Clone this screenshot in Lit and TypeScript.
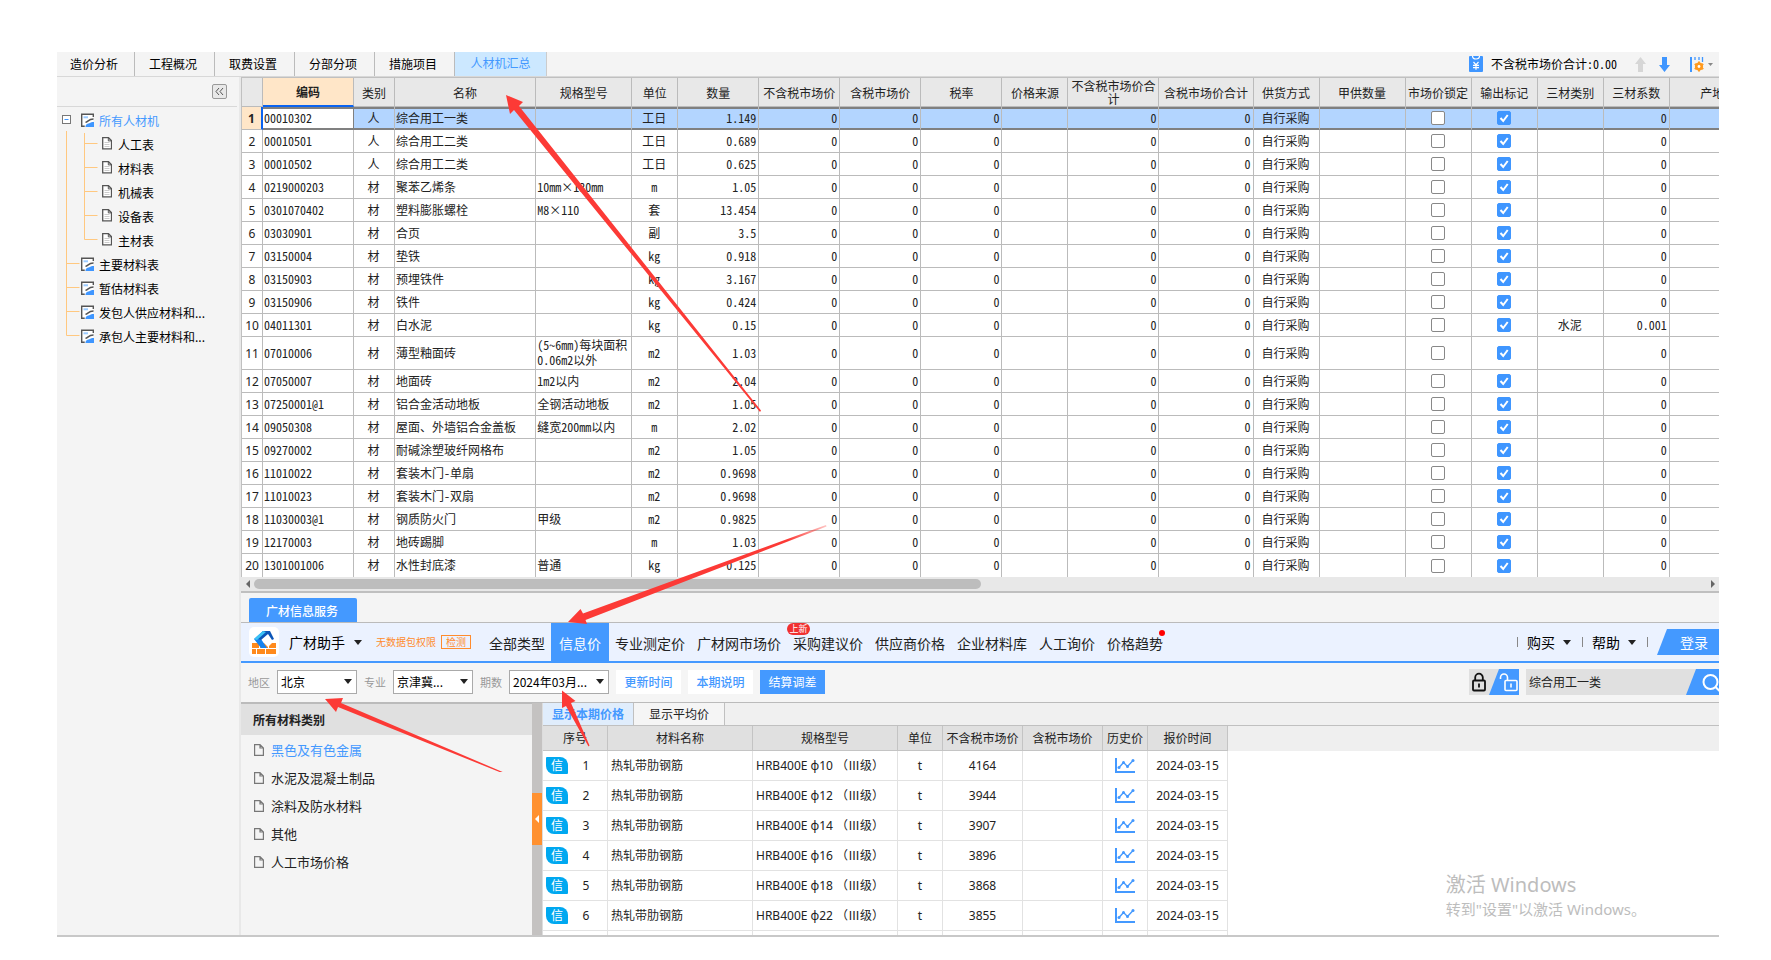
import { LitElement, html, css, svg, nothing } from "lit";
import { customElement } from "lit/decorators.js";
import { classMap } from "lit/directives/class-map.js";

const TABS = ["造价分析", "工程概况", "取费设置", "分部分项", "措施项目", "人材机汇总"];

type Node = { label: string; kind: "root" | "child" | "last-child" | "top" | "last-top" };
const TREE: Node[] = [
  { label: "所有人材机", kind: "root" },
  { label: "人工表", kind: "child" },
  { label: "材料表", kind: "child" },
  { label: "机械表", kind: "child" },
  { label: "设备表", kind: "child" },
  { label: "主材表", kind: "last-child" },
  { label: "主要材料表", kind: "top" },
  { label: "暂估材料表", kind: "top" },
  { label: "发包人供应材料和...", kind: "top" },
  { label: "承包人主要材料和...", kind: "last-top" },
];

const COLS: [string, number][] = [
  ["", 21], ["编码", 91], ["类别", 41], ["名称", 141], ["规格型号", 96], ["单位", 46], ["数量", 81],
  ["不含税市场价", 81], ["含税市场价", 81], ["税率", 81], ["价格来源", 66], ["不含税市场价合计", 91],
  ["含税市场价合计", 94], ["供货方式", 66], ["甲供数量", 86], ["市场价锁定", 66], ["输出标记", 66],
  ["三材类别", 66], ["三材系数", 66], ["产地", 86],
];

type Item = { code: string; type: string; name: string; spec: string; unit: string; qty: string; cat?: string; coef?: string };
const row = (code: string, type: string, name: string, spec: string, unit: string, qty: string, cat = "", coef = "0"): Item =>
  ({ code, type, name, spec, unit, qty, cat, coef });
const ITEMS: Item[] = [
  row("00010302", "人", "综合用工一类", "", "工日", "1.149"),
  row("00010501", "人", "综合用工二类", "", "工日", "0.689"),
  row("00010502", "人", "综合用工二类", "", "工日", "0.625"),
  row("0219000203", "材", "聚苯乙烯条", "10mm×130mm", "m", "1.05"),
  row("0301070402", "材", "塑料膨胀螺栓", "M8×110", "套", "13.454"),
  row("03030901", "材", "合页", "", "副", "3.5"),
  row("03150004", "材", "垫铁", "", "kg", "0.918"),
  row("03150903", "材", "预埋铁件", "", "kg", "3.167"),
  row("03150906", "材", "铁件", "", "kg", "0.424"),
  row("04011301", "材", "白水泥", "", "kg", "0.15", "水泥", "0.001"),
  row("07010006", "材", "薄型釉面砖", "(5~6mm)每块面积\n0.06m2以外", "m2", "1.03"),
  row("07050007", "材", "地面砖", "1m2以内", "m2", "2.04"),
  row("07250001@1", "材", "铝合金活动地板", "全钢活动地板", "m2", "1.05"),
  row("09050308", "材", "屋面、外墙铝合金盖板", "缝宽200mm以内", "m", "2.02"),
  row("09270002", "材", "耐碱涂塑玻纤网格布", "", "m2", "1.05"),
  row("11010022", "材", "套装木门-单扇", "", "m2", "0.9698"),
  row("11010023", "材", "套装木门-双扇", "", "m2", "0.9698"),
  row("11030003@1", "材", "钢质防火门", "甲级", "m2", "0.9825"),
  row("12170003", "材", "地砖踢脚", "", "m", "1.03"),
  row("1301001006", "材", "水性封底漆", "普通", "kg", "0.125"),
];

const NAV = ["全部类型", "信息价", "专业测定价", "广材网市场价", "采购建议价", "供应商价格", "企业材料库", "人工询价", "价格趋势"];
const CATEGORIES = ["黑色及有色金属", "水泥及混凝土制品", "涂料及防水材料", "其他", "人工市场价格"];
const PRICE_COLS: [string, number][] = [
  ["序号", 65], ["材料名称", 145], ["规格型号", 145], ["单位", 45], ["不含税市场价", 80], ["含税市场价", 80], ["历史价", 45], ["报价时间", 80],
];
const PRICES: [string, string][] = [["10", "4164"], ["12", "3944"], ["14", "3907"], ["16", "3896"], ["18", "3868"], ["22", "3855"]];

const caret = html`<svg class="caret" width="8" height="5" viewBox="0 0 8 5"><path d="M0 0h8L4 5z" fill="#222" /></svg>`;

const folderIcon = svg`
  <path d="M0.800 3.300h11.400v11.400H0.800z" fill="#fff" />
  <path d="M12.300 6V3.300H0.700v12h3" fill="none" stroke="#555" stroke-width="1.400" />
  <path d="M2.500 5.300h4.500v2H2.500z" fill="#9ccbff" />
  <path d="M4.500 11.300c2.500 0 2.500-3.300 8-3.300" fill="none" stroke="#555" stroke-width="1.400" />
  <path d="M4.500 16c0-3 2.500-3.400 4.500-4 1.500-1.200 2.600-1.200 4-1v5z" fill="#3f96ff" />`;
const pageIcon = svg`
  <path d="M0.700 2.700h5.800l3 3v8.100H0.700z" fill="#fff" stroke="#555" stroke-width="1.300" />
  <path d="M6.300 2.700v3.200h3.200" fill="none" stroke="#555" />
  <path d="M2.500 7.500h5M2.500 9.500h5M2.500 11.500h5" stroke="#ccc" />`;

@customElement("app-root")
export class AppRoot extends LitElement {
  static styles = css`
    :host { display: block; font: 12px/16px "Noto Sans CJK SC", sans-serif; color: #222; background: #fff; }
    * { box-sizing: border-box; }
    button, select, input { font: inherit; color: inherit; margin: 0; border: 0; padding: 0; background: none; border-radius: 0; }
    a { color: inherit; text-decoration: none; }
    svg { display: block; flex: none; }
    table { border-collapse: separate; border-spacing: 0; table-layout: fixed; }
    .frame { position: relative; margin: 52px 52px 23px 57px; background: #f4f4f4; border-bottom: 2px solid #c8c8c8; overflow: hidden; }

    .top { display: flex; height: 25px; border-bottom: 1px solid #d8d8d8; }
    .tab { width: 80px; padding-right: 3px; border-right: 1px solid #bbb; text-align: center; color: #000; }
    .tab:first-child { width: 78px; }
    .tab.on { width: 92px; padding: 0 0 2px; background: #cce8ff; color: #4499ff; border-color: #ccc; }
    .tools { margin-left: auto; display: flex; align-items: center; padding-right: 6px; color: #000; }
    .total { margin: 0 18px 0 8px; font-family: "Noto Sans Mono CJK SC", "Noto Sans CJK SC", sans-serif; }
    .tools button + button { margin-left: 13px; }
    .tools .gear { display: flex; align-items: center; gap: 4px; margin-left: 20px !important; }

    .body { display: grid; grid-template-columns: 182px 2px minmax(0, 1fr); }
    .strip { background: #e8e8e8; }
    .side-head { display: flex; justify-content: flex-end; align-items: center; height: 30px; margin-right: 2px; padding-right: 10px; border-bottom: 1px solid #d8d8d8; }
    .fold { width: 15px; height: 15px; border: 1px solid #999; border-radius: 2px; background: #e8e8e8; display: grid; place-items: center; }
    .tree { list-style: none; margin: 0; padding: 2px 0 0; }
    .tree li, .tree a { display: flex; align-items: center; }
    .tree li { height: 24px; }
    .tree a { gap: 5px; color: #000; }
    .tree .sub a { gap: 6px; }
    .tree .root a { color: #4499ff; }

    .grid-wrap { height: 500px; overflow: hidden; background: #fff; border-top: 1px solid #c0c0c0; border-left: 1px solid #c0c0c0; }
    .grid { width: 1514px; font-family: "Noto Sans Mono CJK SC", "Noto Sans CJK SC", sans-serif; line-height: 15px; }
    .grid th { height: 29px; background: #e8e8e8; font-weight: 400; border: solid #bbb; border-width: 0 1px 1px 0; padding: 0 2px; line-height: 13px; }
    .grid th.cur { background: #ffe6c8; font-weight: 700; border-bottom: 2px solid #0a63f0; }
    .grid td { height: 23px; border: solid #bbb; border-width: 0 1px 1px 0; padding: 0 2px 2px 1px; white-space: pre; overflow: hidden; }
    .grid .num { font-family: "Noto Sans", sans-serif; text-align: center; padding: 0; }
    .grid .c { text-align: center; }
    .grid .r { text-align: right; }
    .grid .box { padding: 0 2px; }
    .grid tr.sel td { background: #b3d5ff; box-shadow: inset 0 2px #808080, inset 0 -1px #808080; border-bottom-color: #808080; }
    .grid tr.sel td.num { background: #ffe6c8; box-shadow: none; font-weight: 700; border-right: 2px solid #0a63f0; border-bottom-color: #bbb; }
    .grid tr.sel td.edit { background: #fff; border-right-color: #808080; }
    .grid tr.tall td { height: 33px; }
    .grid tr:last-child td { border-bottom: 0; }
    .check { appearance: none; display: block; width: 14px; height: 14px; margin: 0 auto; border: 1px solid #888; border-radius: 2px; background: #fff; }
    .check:checked { border-color: #3f96ff; background: #3f96ff url("data:image/svg+xml,%3Csvg xmlns='http://www.w3.org/2000/svg' viewBox='0 0 12 12'%3E%3Cpath d='M2.500 6l2.700 3 4.500-6' fill='none' stroke='white' stroke-width='2'/%3E%3C/svg%3E"); }
    .scroll { display: flex; align-items: center; gap: 4px; height: 16px; padding: 0 4px 0 5px; background: #e8e8e8; border-bottom: 2px solid #bfbfbf; }
    .track { flex: 1; }
    .thumb { width: 50%; height: 10px; border-radius: 5px; background: #bdbdbd; }

    .dock { height: 30px; padding: 5px 8px 0; border-bottom: 1px solid #bbb; }
    .dock button { width: 108px; height: 24px; padding: 1px 2px 0 0; border-radius: 2px 2px 0 0; background: #4499ff; color: #fff; font-weight: 500; }
    .nav { display: flex; align-items: center; height: 40px; padding-left: 8px; background: #ebf2ff; border-bottom: 2px solid #4499ff; font-size: 14px; }
    .logo { width: 30px; height: 30px; border-radius: 5px; background: #fff; display: grid; place-items: center; }
    .helper { display: flex; align-items: center; gap: 9px; margin-left: 10px; color: #000; }
    .warn { margin-left: 14px; font-size: 10px; color: #ff8c2e; }
    .detect { height: 14px; margin: 0 12px 0 5px; padding: 0 4px; border: 1px solid #ff8c2e; font-size: 10px; line-height: 12px; color: #ff8c2e; }
    .links { display: flex; align-self: stretch; }
    .links a { position: relative; display: flex; align-items: center; padding: 1px 6px 0; }
    .links a.on { padding: 1px 8px 0; background: #4499ff; color: #fff; }
    .badge { position: absolute; top: 0; left: 0; width: 23px; height: 12px; border-radius: 6px; background: #f03030; color: #fff; font-size: 9px; line-height: 12px; text-align: center; }
    .dot { position: absolute; top: 7px; right: 4px; width: 6px; height: 6px; border-radius: 3px; background: red; }
    .account { display: flex; align-items: center; margin-left: auto; color: #000; }
    .account .menu { display: flex; align-items: center; gap: 8px; height: 10px; padding: 0 11px 0 9px; border-left: 1px solid #888; }
    .account .end { width: 10px; height: 10px; border-left: 1px solid #888; }
    .login { width: 62px; height: 26px; padding-left: 12px; background: #4499ff; color: #fff; clip-path: polygon(10px 0, 100% 0, 100% 100%, 0 100%); }

    .filters { display: flex; align-items: center; height: 40px; padding: 0 0 1px 7px; border-bottom: 1px solid #bbb; background: #f5f5f5; }
    .filters label { margin-right: 7px; font-size: 11px; color: #999; }
    .pick { position: relative; width: 80px; height: 24px; margin-right: 7px; }
    .pick.wide { width: 100px; }
    .pick select { appearance: none; width: 100%; height: 100%; padding: 0 16px 0 3px; border: 1px solid #aaa; background: #fff; color: #000; }
    .pick .caret { position: absolute; right: 5px; top: 9px; pointer-events: none; }
    .act { width: 65px; height: 24px; margin-right: 7px; background: #fff; color: #4499ff; font-weight: 500; }
    .act.fill { background: #4499ff; color: #fff; font-weight: 400; }
    .lock { display: block; margin: 0 7px 0 auto; }
    .search { display: flex; width: 193px; height: 26px; background: #e0e0e0; }
    .search input { flex: 1; min-width: 0; padding: 0 3px; }

    .lower { display: grid; grid-template-columns: 291px 11px minmax(0, 1fr); grid-template-rows: 100%; height: 232px; overflow: hidden; }
    .cats h2 { margin: 0; height: 32px; padding: 0 12px; border-top: 1px solid #bbb; background: #e0e0e0; font-size: 12px; line-height: 31px; }
    .cats ul { list-style: none; margin: 0; padding: 1px 0; font-size: 13px; }
    .cats a { display: flex; align-items: center; gap: 7px; height: 28px; padding-left: 13px; }
    .cats .on { color: #4499ff; }
    .split { display: flex; align-items: center; background: #c4c2c1; border-right: 1px solid #ddd; }
    .split button { width: 10px; height: 52px; background: #ff9130; display: grid; place-items: center; }
    .prices { position: relative; background: #fff; }
    .subtabs { display: flex; height: 23px; background: #f0f0f0; border-bottom: 1px solid #c0c0c0; }
    .subtabs button { width: 91px; border-right: 1px solid #c0c0c0; background: #f5f5f5; }
    .subtabs button.on { background: #e0edfc; color: #4499ff; font-weight: 700; }
    .price-head { background: linear-gradient(#efefef, #efefef) 0 0 / 100% 25px no-repeat; }
    .price { width: 685px; font-family: "Noto Sans", "Noto Sans CJK SC", sans-serif; }
    .price th { height: 25px; padding: 1px 0 0; background: #e0e0e0; font-weight: 400; border: solid #c4c4c4; border-width: 0 1px 1px 0; white-space: nowrap; }
    .price td { height: 30px; padding: 0 3px; border: solid #e2e2e2; border-width: 0 1px 1px 0; white-space: nowrap; }
    .price .c { text-align: center; }
    .seq { display: flex; align-items: center; }
    .seq b { width: 22px; height: 17px; border-radius: 1px 8px 1px 8px; background: #00a8f0; color: #fff; font-weight: 400; line-height: 17px; text-align: center; }
    .seq span { flex: 1; text-align: center; }
    .spec { white-space: pre; }
    .grade { font-family: "Noto Sans CJK SC", sans-serif; }
    .chart { margin: 0 auto; }
    .mark { position: absolute; right: 73px; bottom: 16px; font-family: "Noto Sans", "Noto Sans CJK SC", sans-serif; color: #bdbdbd; font-size: 15px; line-height: 20px; }
    .mark p { margin: 0; }
    .mark .big { font-size: 20px; line-height: 28px; }
    .arrows { position: absolute; left: 0; top: 0; pointer-events: none; }
  `;

  private treeRow(n: Node) {
    const child = n.kind.endsWith("child");
    const last = n.kind.startsWith("last");
    const lines =
      n.kind === "root"
        ? svg`<rect x="5.500" y="6.500" width="8" height="8" fill="#fff" stroke="#777"/><path d="M7.500 10.500h4" stroke="#3f96ff"/>
            <path d="M9.500 22v2M27.500 22v2" stroke="#ffc880"/>`
        : child
          ? svg`<path d="M9.500 0v24M27.500 0V${last ? 10.5 : 24}M27.500 10.500h13" fill="none" stroke="#ffc880"/>`
          : svg`<path d="M9.500 0V${last ? 10.5 : 24}M9.500 10.500h13" fill="none" stroke="#ffc880"/>`;
    return html`<li class=${classMap({ sub: child, root: n.kind === "root" })}>
      <svg width=${child ? 45 : 24} height="24">${lines}</svg>
      <a href="#">
        <svg width=${child ? 10 : 13} height="20" viewBox=${child ? "0 0 10 20" : "0 0 13 20"}>${child ? pageIcon : folderIcon}</svg>
        <span>${n.label}</span>
      </a>
    </li>`;
  }

  private gridRow(it: Item, i: number) {
    return html`<tr class=${classMap({ sel: i === 0, tall: it.spec.includes("\n") })}>
      <td class="num">${i + 1}</td>
      <td class="edit">${it.code}</td>
      <td class="c">${it.type}</td>
      <td>${it.name}</td>
      <td>${it.spec}</td>
      <td class="c">${it.unit}</td>
      <td class="r">${it.qty}</td>
      <td class="r">0</td><td class="r">0</td><td class="r">0</td><td></td><td class="r">0</td><td class="r">0</td>
      <td class="c">自行采购</td>
      <td></td>
      <td class="box"><input class="check" type="checkbox" aria-label="市场价锁定" /></td>
      <td class="box"><input class="check" type="checkbox" aria-label="输出标记" checked /></td>
      <td class="c">${it.cat}</td>
      <td class="r">${it.coef}</td>
      <td></td>
    </tr>`;
  }

  private cols(list: [string, number][]) {
    return html`<colgroup>${list.map(([, w]) => html`<col width=${w} />`)}</colgroup>`;
  }

  render() {
    return html`<div class="frame">
      <nav class="top">
        ${TABS.map((t, i) => html`<button class=${classMap({ tab: true, on: i === 5 })}>${t}</button>`)}
        <div class="tools">
          <svg width="14" height="16" viewBox="0 0 14 16"><rect width="14" height="16" rx="1" fill="#3f96ff" />
            <path d="M3.500 0q0 3 3.500 3t3.500-3M4.500 6l2.500 2.800L9.500 6M7 8.800v5M4 9.300h6M4 11.600h6" fill="none" stroke="#fff" stroke-width="1.200" /></svg>
          <span class="total">不含税市场价合计:0.00</span>
          <button aria-label="上移"><svg width="11" height="15" viewBox="0 0 11 15"><path d="M5.500 0L11 7H8v8H3V7H0z" fill="#d6d6d6" /></svg></button>
          <button aria-label="下移"><svg width="11" height="15" viewBox="0 0 11 15"><path d="M5.500 15L11 8H8V0H3v8H0z" fill="#3f96ff" /></svg></button>
          <button class="gear" aria-label="设置">
            <svg width="14" height="15" viewBox="0 0 14 15"><path d="M1 0v15" stroke="#3f96ff" stroke-width="2" />
              <path d="M5 0v3M9 0v3M12.500 0v5" stroke="#3f96ff" stroke-width="1.300" />
              <circle cx="9" cy="9.500" r="2.800" fill="none" stroke="#ff9a1f" stroke-width="2.600" />
              <path d="M9 4.500v10M4.700 7l8.600 5M4.700 12l8.600-5" stroke="#ff9a1f" stroke-width="2" /><circle cx="9" cy="9.500" r="1.400" fill="#fff" /></svg>
            <svg width="5" height="3" viewBox="0 0 5 3"><path d="M0 0h5L2.500 3z" fill="#888" /></svg>
          </button>
        </div>
      </nav>

      <div class="body">
        <aside>
          <div class="side-head"><button class="fold" aria-label="收起"><svg width="9" height="7" viewBox="0 0 9 7"><path d="M4 0L1 3.500l3 3.500M8 0L5 3.500l3 3.500" fill="none" stroke="#555" /></svg></button></div>
          <ul class="tree">${TREE.map((n) => this.treeRow(n))}</ul>
        </aside>
        <div class="strip"></div>
        <main>
          <div class="grid-wrap">
            <table class="grid">
              ${this.cols(COLS)}
              <thead><tr>${COLS.map(([t], i) => html`<th class=${i === 1 ? "cur" : nothing}>${t}</th>`)}</tr></thead>
              <tbody>${ITEMS.map((it, i) => this.gridRow(it, i))}</tbody>
            </table>
          </div>
          <div class="scroll">
            <svg width="4" height="8" viewBox="0 0 4 8"><path d="M4 0v8L0 4z" fill="#666" /></svg>
            <div class="track"><div class="thumb"></div></div>
            <svg width="4" height="8" viewBox="0 0 4 8"><path d="M0 0v8l4-4z" fill="#666" /></svg>
          </div>

          <div class="dock"><button>广材信息服务</button></div>
          <div class="nav">
            <div class="logo"><svg width="24" height="24" viewBox="0 0 24 24">
              <path d="M0 13h7v5H0zM8 13h8v5H8zM17 13h7v5h-7zM0 19h4v5H0zM5 19h8v5H5zM14 19h10v5H14z" fill="#ff8a1c" />
              <path d="M11 1L2 9l7 9h6l-6-9 9-8z" fill="#1683f0" />
              <path d="M11 1h7l4 8-2 1-4-6-7 6-3-1z" fill="#0c56b8" /><path d="M11 1L2 9l3 1 9-8z" fill="#3cc3f5" />
              <path d="M12 13l4 4 4-4z" fill="#fff" /></svg></div>
            <button class="helper">广材助手 ${caret}</button>
            <span class="warn">无数据包权限</span>
            <button class="detect">检测</button>
            <div class="links">
              ${NAV.map((t, i) => html`<a href="#" class=${i === 1 ? "on" : nothing}>${t}${i === 4 ? html`<span class="badge">上新</span>` : nothing}${i === 8 ? html`<span class="dot"></span>` : nothing}</a>`)}
            </div>
            <div class="account">
              <button class="menu">购买 ${caret}</button>
              <button class="menu">帮助 ${caret}</button>
              <span class="end"></span>
              <button class="login">登录</button>
            </div>
          </div>

          <div class="filters">
            <label for="area">地区</label>
            <div class="pick"><select id="area"><option>北京</option></select>${caret}</div>
            <label for="major">专业</label>
            <div class="pick"><select id="major"><option>京津冀...</option></select>${caret}</div>
            <label for="period">期数</label>
            <div class="pick wide"><select id="period"><option>2024年03月...</option></select>${caret}</div>
            <button class="act">更新时间</button>
            <button class="act">本期说明</button>
            <button class="act fill">结算调差</button>
            <button class="lock" aria-label="锁定"><svg width="50" height="26" viewBox="0 0 50 26">
              <rect width="50" height="26" fill="#e0e0e0" /><path d="M30 0h20v26H20z" fill="#4499ff" />
              <rect x="4" y="11.500" width="12" height="10" rx="1" fill="none" stroke="#111" stroke-width="1.800" />
              <path d="M6.200 11V8.500a3.800 3.800 0 0 1 7.600 0V11M10 14.500v4" fill="none" stroke="#111" stroke-width="1.800" />
              <rect x="36" y="11.500" width="12" height="10" rx="1" fill="none" stroke="#fff" stroke-width="1.600" />
              <path d="M38.500 11V8.500a3.500 3.500 0 0 0-7 0V10M42 14.500v4" fill="none" stroke="#fff" stroke-width="1.600" /></svg></button>
            <div class="search"><input type="text" aria-label="搜索" value="综合用工一类" />
              <button aria-label="搜索"><svg width="33" height="26" viewBox="0 0 33 26"><path d="M10 0h23v26H0z" fill="#4499ff" />
                <circle cx="24.500" cy="13" r="7" fill="none" stroke="#fff" stroke-width="2" /><path d="M29.500 18l4 4" stroke="#fff" stroke-width="2" /></svg></button>
            </div>
          </div>

          <div class="lower">
            <div class="cats">
              <h2>所有材料类别</h2>
              <ul>${CATEGORIES.map((t, i) => html`<li><a href="#" class=${i === 0 ? "on" : nothing}>
                <svg width="10" height="12" viewBox="0 0 10 12"><path d="M0.600 0.600h5.400l3.400 3.400v7.400H0.600zM6 0.600V4h3.400" fill="none" stroke="#777" stroke-width="1.200" /></svg>${t}</a></li>`)}</ul>
            </div>
            <div class="split"><button aria-label="收起类别"><svg width="4" height="8" viewBox="0 0 4 8"><path d="M4 0v8L0 4z" fill="#fff" /></svg></button></div>
            <div class="prices">
              <div class="subtabs"><button class="on">显示本期价格</button><button>显示平均价</button></div>
              <div class="price-head">
                <table class="price">
                  ${this.cols(PRICE_COLS)}
                  <thead><tr>${PRICE_COLS.map(([t]) => html`<th>${t}</th>`)}</tr></thead>
                  <tbody>
                    ${PRICES.map(([d, p], i) => html`<tr>
                      <td><div class="seq"><b>信</b><span>${i + 1}</span></div></td>
                      <td>热轧带肋钢筋</td>
                      <td class="spec">HRB400E φ${d} <span class="grade">（Ⅲ级）</span></td>
                      <td class="c">t</td>
                      <td class="c">${p}</td>
                      <td></td>
                      <td><svg class="chart" width="20" height="15" viewBox="0 0 20 15"><path d="M1 0v14h19" fill="none" stroke="#4499ff" stroke-width="2" />
                        <path d="M4 9.500L8.500 4.500l4 4L18.500 2" fill="none" stroke="#4499ff" stroke-width="1.400" />
                        <g fill="#4499ff"><circle cx="4" cy="9.500" r="1.500" /><circle cx="8.500" cy="4.500" r="1.500" /><circle cx="12.500" cy="8.500" r="1.500" /><circle cx="18" cy="2.500" r="1.500" /></g></svg></td>
                      <td class="c">2024-03-15</td>
                    </tr>`)}
                    <tr>${PRICE_COLS.map(() => html`<td></td>`)}</tr>
                  </tbody>
                </table>
              </div>
              <div class="mark"><p class="big">激活 Windows</p><p>转到"设置"以激活 Windows。</p></div>
            </div>
          </div>
        </main>
      </div>

      <svg class="arrows" width="800" height="720" viewBox="57 52 800 720" fill="#fc3a36">
        <defs><linearGradient id="fade" x1="568" y1="622" x2="826" y2="525" gradientUnits="userSpaceOnUse"><stop offset="0.850" stop-color="#fc3a36" /><stop offset="1" stop-color="#fc3a36" stop-opacity="0.300" /></linearGradient></defs>
        <path d="M506 95L523 102L519 106L761 410.500L760 412L514 110L510 114z" />
        <path d="M568 622L580.500 609L583 613.500L826 525L826.500 526.500L585.500 620L587 624z" fill="url(#fade)" />
        <path d="M325 699L343 698L341 703L505 773L504.500 774L338 707L336 712z" />
        <path d="M562 690.500L575.500 701L571 703L589.500 745.500L588.500 746.500L566 706L562 708z" />
      </svg>
    </div>`;
  }
}
